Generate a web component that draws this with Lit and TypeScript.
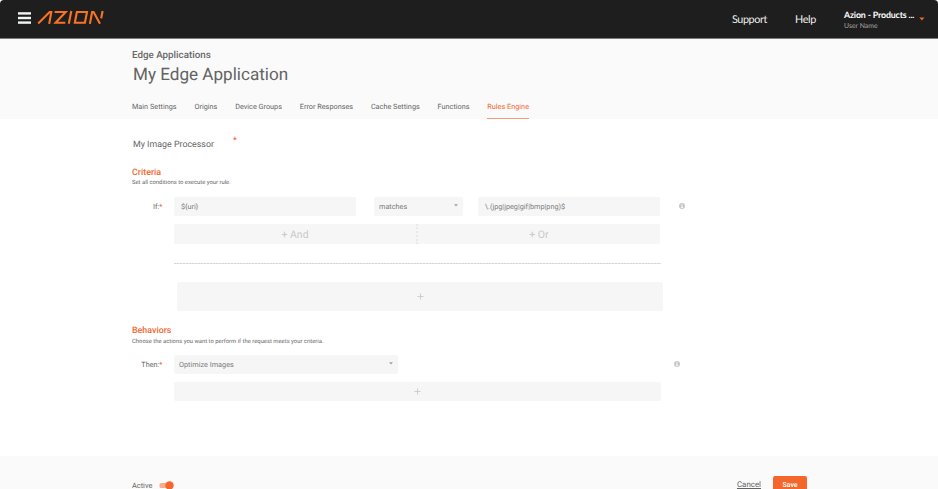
import { LitElement, html, css } from "lit";
import { customElement, property } from "lit/decorators.js";
import { classMap } from "lit/directives/class-map.js";

const TABS = [
  "Main Settings",
  "Origins",
  "Device Groups",
  "Error Responses",
  "Cache Settings",
  "Functions",
  "Rules Engine",
];

@customElement("azion-header")
class AzionHeader extends LitElement {
  static styles = css`
    :host {
      display: block;
      font-family: Lato, sans-serif;
    }
    .bar {
      box-sizing: border-box;
      height: 39px;
      display: flex;
      align-items: flex-start;
      background: #1e1e1e;
      border-bottom: 1px solid #7b7b7b;
      border-radius: 4px 4px 0 0;
      color: #f0f0f0;
    }
    .menu {
      width: 13px;
      height: 12px;
      margin: 12px 0 0 18px;
    }
    .logo {
      width: 68px;
      height: 16px;
      margin: 9px 0 0 6px;
    }
    .link {
      font-size: 10.8px;
      letter-spacing: -0.4px;
      line-height: 16px;
      margin-top: 12px;
      white-space: nowrap;
    }
    .support {
      width: 63px;
      margin-left: auto;
    }
    .help {
      width: 49px;
    }
    .account {
      width: 75px;
      margin-top: 8px;
      white-space: nowrap;
    }
    .name {
      font-size: 8.8px;
      letter-spacing: -0.15px;
      font-weight: 700;
      line-height: 13px;
      color: #fff;
    }
    .user {
      font-size: 6.9px;
      line-height: 9px;
      margin-top: 1px;
      color: #a5a5a5;
    }
    .caret {
      width: 6px;
      height: 4px;
      margin: 17px 13px 0 0;
    }
  `;

  render() {
    return html`
      <header class="bar">
        <svg class="menu" viewBox="0 0 13 12" fill="#f1f5f3">
          <rect y="0.2" width="13" height="2.4" />
          <rect y="4.8" width="13" height="2.4" />
          <rect y="9.4" width="13" height="2.4" />
        </svg>
        <svg class="logo" viewBox="37 9 68 16" fill="none" stroke="#f87424" stroke-width="2.1">
          <path d="M38.2 23.6 L49.6 12 H51.3 L49.2 23.9" />
          <path d="M54.6 12 H65.7 L55.6 22.8 H65.3" />
          <path d="M71.3 11 L68.8 23.8" />
          <path d="M76.9 12 H87 L84.9 22.8 H74.8 Z" />
          <path d="M89.9 23.9 L92.1 12 H93.6 L100 23.7" />
          <path d="M102.6 11 L101.2 18.4" />
        </svg>
        <span class="link support">Support</span>
        <span class="link help">Help</span>
        <div class="account">
          <div class="name">Azion - Products ...</div>
          <div class="user">User Name</div>
        </div>
        <svg class="caret" viewBox="0 0 6 4" fill="#f4662b"><path d="M0.4 0.6H5.4L2.9 3.5Z" /></svg>
      </header>
    `;
  }
}

@customElement("info-dot")
class InfoDot extends LitElement {
  static styles = css`
    :host {
      display: block;
      width: 6px;
      height: 6px;
    }
    svg {
      display: block;
    }
  `;

  render() {
    return html`<svg width="6" height="6" viewBox="0 0 6 6">
      <circle cx="3" cy="3" r="3" fill="#c8c8c8" />
      <path d="M2.5 1.1H3.5V1.8H2.5Z M2.2 2.4H3.5V4.3H3.9V4.9H2.1V4.3H2.5V3H2.2Z" fill="#fff" />
    </svg>`;
  }
}

@customElement("add-bar")
class AddBar extends LitElement {
  static styles = css`
    :host {
      display: flex;
      align-items: center;
      justify-content: center;
      background: #f6f6f6;
      border-radius: 2px;
    }
    svg {
      display: block;
    }
  `;

  render() {
    return html`<svg width="7" height="7" viewBox="0 0 7 7" stroke="#cbcbcb" stroke-width="0.9">
      <path d="M3.5 0.4V6.6M0.4 3.5H6.6" />
    </svg>`;
  }
}

@customElement("field-box")
class FieldBox extends LitElement {
  @property() value = "";
  @property({ type: Boolean }) select = false;

  static styles = css`
    :host {
      box-sizing: border-box;
      height: 19px;
      display: flex;
      align-items: center;
      justify-content: space-between;
      background: #f6f6f6;
      border-radius: 2px;
      font-size: 7.3px;
      color: #7c7c7c;
      white-space: nowrap;
    }
    svg {
      display: block;
      margin-bottom: 2px;
    }
  `;

  render() {
    return html`<span>${this.value}</span>${this.select
        ? html`<svg width="4" height="3" viewBox="0 0 4 3" fill="#a0a0a0"><path d="M0 0.3H4L2 2.5Z" /></svg>`
        : ""}`;
  }
}

@customElement("app-root")
class AppRoot extends LitElement {
  static styles = css`
    :host {
      display: flex;
      flex-direction: column;
      height: 489px;
      overflow: hidden;
      background: #fff;
      font-family: Roboto, sans-serif;
      color: #666;
      text-rendering: geometricPrecision;
    }
    .top {
      box-sizing: border-box;
      height: 80px;
      padding: 10px 0 0 132px;
      background: #fafafa;
      flex: none;
    }
    .crumb {
      font-size: 9.8px;
      line-height: 13px;
      font-weight: 500;
      color: #686868;
    }
    .title {
      margin: 1px 0 0 1px;
      font-size: 17.1px;
      line-height: 25px;
      font-weight: 400;
      color: #636363;
    }
    .tabs {
      display: flex;
      gap: 17.8px;
      margin-top: 12px;
      font-size: 7.3px;
      line-height: 13px;
      white-space: nowrap;
    }
    .tab {
      height: 18px;
    }
    .tab.active {
      color: #f4662f;
      border-bottom: 1px solid #f79a78;
    }
    .main {
      height: 337px;
      flex: none;
      display: flex;
      flex-direction: column;
      padding-left: 132px;
    }
    .rule {
      display: flex;
      height: 16px;
      margin: 18px 0 0 1px;
      font-size: 8.85px;
      line-height: 16px;
    }
    .rule .star {
      margin-left: 19px;
      line-height: 9px;
      font-size: 9px;
    }
    .star {
      color: #f0552f;
    }
    h2 {
      margin: 14px 0 0;
      font-size: 8.9px;
      line-height: 12px;
      font-weight: 500;
      color: #f4662f;
    }
    .hint {
      font-size: 5.87px;
      line-height: 9px;
    }
    .row {
      display: flex;
      align-items: center;
      height: 19px;
    }
    .label {
      width: 30.5px;
      margin-right: 11.5px;
      text-align: right;
      font-size: 7.3px;
      white-space: nowrap;
    }
    .conditions {
      margin-top: 9px;
    }
    .uri {
      width: 182px;
      padding: 0 7px;
    }
    .operator {
      width: 89px;
      margin: 0 15px 0 18px;
      padding: 0 5px;
    }
    .pattern {
      width: 182px;
      padding: 0 7px;
    }
    .row info-dot {
      margin-left: 19px;
      margin-bottom: 1px;
    }
    .joins {
      display: grid;
      grid-template-columns: 242px 244px;
      height: 20px;
      margin: 8px 0 0 42px;
      font-size: 10.5px;
      color: #c9c9c9;
    }
    .join {
      box-sizing: border-box;
      display: flex;
      align-items: center;
      justify-content: center;
      background: #f6f6f6;
      border-radius: 2px 0 0 2px;
    }
    .join + .join {
      border-left: 2px dotted #e9e9e9;
      border-radius: 0 2px 2px 0;
    }
    .divider {
      width: 487px;
      height: 1px;
      margin: 19px 0 0 42px;
      background: repeating-linear-gradient(90deg, #d6d6d6 0 2px, #e6e6e6 2px 3px);
    }
    .add-criteria {
      width: 486px;
      height: 29px;
      margin: 18px 0 0 45px;
    }
    .behaviors {
      margin-top: 14px;
    }
    .hint.lower {
      padding-top: 1px;
    }
    .action {
      width: 224px;
      padding: 0 5px;
    }
    .action-row {
      margin-top: 8px;
    }
    .row.action-row info-dot {
      margin-left: 276px;
      margin-bottom: 2px;
    }
    .add-behavior {
      width: 487px;
      height: 19px;
      margin: 8px 0 0 42px;
    }
    .footer {
      box-sizing: border-box;
      flex: 1;
      display: flex;
      align-items: flex-start;
      padding: 20px 131px 0 132px;
      background: #fafafa;
      font-size: 7.4px;
      line-height: 19px;
    }
    .toggle {
      width: 15px;
      height: 9px;
      margin: 5px 0 0 7px;
    }
    .cancel {
      margin: -1px 12px 0 auto;
      font-size: 7.9px;
      text-decoration: underline;
      text-underline-offset: 1px;
      color: #636363;
    }
    .save {
      width: 34px;
      height: 20px;
      background: #f4662b;
      border-radius: 2px;
      color: #fff;
      text-align: center;
      font-weight: 500;
      font-size: 7px;
    }
  `;

  render() {
    return html`
      <azion-header></azion-header>
      <section class="top">
        <div class="crumb">Edge Applications</div>
        <div class="title">My Edge Application</div>
        <nav class="tabs">
          ${TABS.map(
            (tab) => html`<span class=${classMap({ tab: true, active: tab === "Rules Engine" })}>${tab}</span>`
          )}
        </nav>
      </section>
      <main class="main">
        <div class="rule"><span>My Image Processor</span><span class="star">*</span></div>
        <h2>Criteria</h2>
        <div class="hint">Set all conditions to execute your rule.</div>
        <div class="row conditions">
          <span class="label">If:<span class="star">*</span></span>
          <field-box class="uri" .value=${"${uri}"}></field-box>
          <field-box class="operator" value="matches" select></field-box>
          <field-box class="pattern" .value=${"\\.(jpg|jpeg|gif|bmp|png)$"}></field-box>
          <info-dot></info-dot>
        </div>
        <div class="joins">
          <span class="join">+ And</span>
          <span class="join">+ Or</span>
        </div>
        <div class="divider"></div>
        <add-bar class="add-criteria"></add-bar>
        <h2 class="behaviors">Behaviors</h2>
        <div class="hint lower">Choose the actions you want to perform if the request meets your criteria.</div>
        <div class="row action-row">
          <span class="label">Then:<span class="star">*</span></span>
          <field-box class="action" value="Optimize Images" select></field-box>
          <info-dot></info-dot>
        </div>
        <add-bar class="add-behavior"></add-bar>
      </main>
      <footer class="footer">
        <span>Active</span>
        <svg class="toggle" viewBox="0 0 15 9">
          <rect x="0.5" y="2" width="12" height="5" rx="1.5" fill="#f9ab8d" />
          <circle cx="10.5" cy="4.5" r="4.2" fill="#f4662b" />
        </svg>
        <span class="cancel">Cancel</span>
        <span class="save">Save</span>
      </footer>
    `;
  }
}
